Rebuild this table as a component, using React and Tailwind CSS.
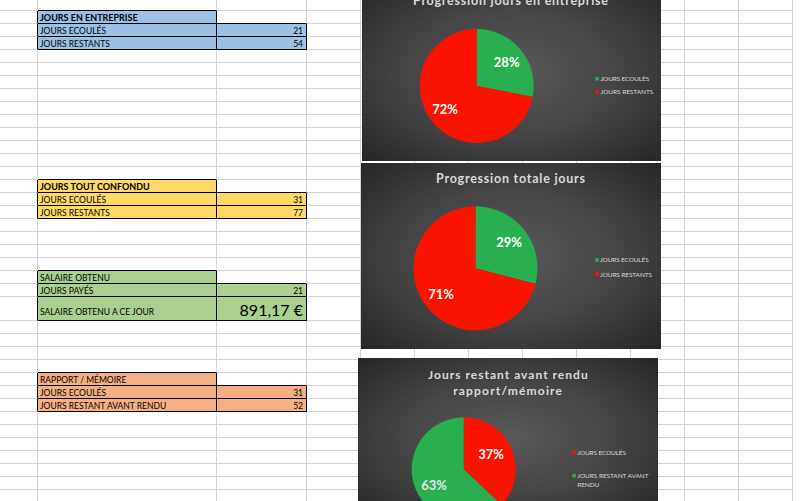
import React from "react";

const GREEN = "#2aaf50";
const RED = "#fa1400";

// column widths of the sheet (first one is cut by the window)
const COLS = [
  "w-[38px]",
  "w-[179px]",
  "w-[90px]",
  "w-[54px]",
  "w-[54px]",
  "w-[54px]",
  "w-[54px]",
  "w-[54px]",
  "w-[54px]",
  "w-[54px]",
  "w-[54px]",
  "w-[54px]",
];

const ROWS = 38;

const sheet = {
  1: { label: "JOURS EN ENTREPRISE", bg: "bg-[#9bc2e6]", head: true, bold: true },
  2: { label: "JOURS ECOULÉS", value: "21", bg: "bg-[#9bc2e6]" },
  3: { label: "JOURS RESTANTS", value: "54", bg: "bg-[#9bc2e6]" },
  14: { label: "JOURS TOUT CONFONDU", bg: "bg-[#ffd966]", head: true, bold: true },
  15: { label: "JOURS ECOULÉS", value: "31", bg: "bg-[#ffd966]" },
  16: { label: "JOURS RESTANTS", value: "77", bg: "bg-[#ffd966]" },
  21: { label: "SALAIRE OBTENU", bg: "bg-[#a9d08e]", head: true },
  22: { label: "JOURS PAYÉS", value: "21", bg: "bg-[#a9d08e]" },
  23: { label: "SALAIRE OBTENU A CE JOUR", value: "891,17 €", bg: "bg-[#a9d08e]", big: true },
  28: { label: "RAPPORT / MÉMOIRE", bg: "bg-[#f4b084]", head: true },
  29: { label: "JOURS ECOULÉS", value: "31", bg: "bg-[#f4b084]" },
  30: { label: "JOURS RESTANT AVANT RENDU", value: "52", bg: "bg-[#f4b084]" },
};

const colored = (r, c) => {
  const row = sheet[r];
  if (!row) return false;
  if (c === 1) return true;
  if (c === 2) return !row.head;
  return false;
};

const rowHeight = (r) => (r === 0 ? "h-[11px]" : r === 23 ? "h-[24px]" : "h-[13px]");

function Cell({ r, c }) {
  const row = sheet[r];
  const on = colored(r, c);
  const right = on || colored(r, c + 1) ? "border-r-black" : "border-r-[#d4d4d4]";
  const bottom = on || colored(r + 1, c) ? "border-b-black" : "border-b-[#d4d4d4]";

  let content = null;
  if (on && c === 1) {
    content = (
      <span
        className={`whitespace-nowrap pl-[2px] leading-[10px] ${row.bold ? "text-[9px] font-bold" : "text-[8.5px]"} ${row.big ? "pb-[3px]" : ""}`}
      >
        {row.label}
      </span>
    );
  }
  if (on && c === 2) {
    content = row.big ? (
      <span className="ml-auto whitespace-nowrap pr-[3px] pb-[2px] text-[16px] leading-[17px]">{row.value}</span>
    ) : (
      <span className="ml-auto pr-[3px] text-[8.5px] leading-[10px]">{row.value}</span>
    );
  }

  return (
    <div
      className={`flex shrink-0 items-end border-r border-b text-black ${COLS[c]} ${right} ${bottom} ${on ? row.bg : "bg-white"}`}
    >
      {content}
    </div>
  );
}

function slice(cx, cy, r, a0, a1) {
  const p = (f) => [cx + r * Math.sin(2 * Math.PI * f), cy - r * Math.cos(2 * Math.PI * f)];
  const [x0, y0] = p(a0);
  const [x1, y1] = p(a1);
  const large = a1 - a0 > 0.5 ? 1 : 0;
  return `M${cx} ${cy} L${x0} ${y0} A${r} ${r} 0 ${large} 1 ${x1} ${y1} Z`;
}

function Chart({ box, pie, labels, titles, legend }) {
  let acc = 0;
  return (
    <div
      className={`absolute overflow-hidden bg-[radial-gradient(ellipse_at_center,#5a5a5a_0%,#454545_50%,#262626_100%)] ${box}`}
    >
      <svg width="100%" height="100%" className="block font-['Lato',sans-serif]">
        {titles.map((t) => (
          <text
            key={t.t}
            x={t.x}
            y={t.y}
            fontSize={t.fs}
            fontWeight="700"
            fill="#d9d9d9"
            textLength={t.len}
            lengthAdjust="spacing"
          >
            {t.t}
          </text>
        ))}
        {pie.slices.map((s) => {
          const a0 = acc;
          acc += s.f;
          return <path key={s.color} d={slice(pie.cx, pie.cy, pie.r, a0, acc)} fill={s.color} />;
        })}
        {labels.map((l) => (
          <text
            key={l.t}
            x={l.x}
            y={l.y + 4.6}
            textAnchor="middle"
            fontSize="13"
            fontWeight="700"
            fill={l.fill || "#ffffff"}
          >
            {l.t}
          </text>
        ))}
        {legend.items.map((it) => (
          <g key={it.t}>
            <rect x={legend.sx} y={it.y - 1.8} width="3.6" height="3.6" fill={it.color} />
            <text x={legend.tx} y={it.y + 2.3} fontSize="6.5" fill="#d9d9d9" textLength={it.len} lengthAdjust="spacing">
              {it.t}
            </text>
            {it.more && (
              <text x={legend.tx} y={it.more.y + 2.3} fontSize="6.5" fill="#d9d9d9" textLength={it.more.len} lengthAdjust="spacing">
                {it.more.t}
              </text>
            )}
          </g>
        ))}
      </svg>
    </div>
  );
}

export default function App() {
  const rows = Array.from({ length: ROWS }, (_, r) => r);
  return (
    <div className="relative h-[501px] w-[800px] overflow-hidden bg-white font-['Lato',sans-serif]">
      <div className="flex flex-col">
        {rows.map((r) => (
          <div key={r} className={`flex ${rowHeight(r)}`}>
            {COLS.map((_, c) => (
              <Cell key={c} r={r} c={c} />
            ))}
          </div>
        ))}
      </div>

      <Chart
        box="left-[362px] top-[-16px] w-[299px] h-[177px]"
        titles={[{ t: "Progression jours en entreprise", x: 51, y: 21, fs: 12.5, len: 195 }]}
        pie={{ cx: 114.7, cy: 102, r: 57, slices: [{ f: 0.28, color: GREEN }, { f: 0.72, color: RED }] }}
        labels={[
          { t: "28%", x: 144.7, y: 78.7 },
          { t: "72%", x: 83, y: 125.3 },
        ]}
        legend={{
          sx: 233.3,
          tx: 238.5,
          items: [
            { t: "JOURS ECOULÉS", color: GREEN, y: 94.7, len: 48.7 },
            { t: "JOURS RESTANTS", color: RED, y: 107.7, len: 52.7 },
          ],
        }}
      />

      <Chart
        box="left-[361px] top-[163px] w-[300px] h-[186px]"
        titles={[{ t: "Progression totale jours", x: 75, y: 20.3, fs: 12.5, len: 149 }]}
        pie={{ cx: 114.5, cy: 105.3, r: 62, slices: [{ f: 0.29, color: GREEN }, { f: 0.71, color: RED }] }}
        labels={[
          { t: "29%", x: 148, y: 79.3 },
          { t: "71%", x: 80, y: 131.3 },
        ]}
        legend={{
          sx: 234.3,
          tx: 239,
          items: [
            { t: "JOURS ECOULÉS", color: GREEN, y: 97, len: 48.7 },
            { t: "JOURS RESTANTS", color: RED, y: 111.3, len: 52 },
          ],
        }}
      />

      <Chart
        box="left-[358px] top-[358px] w-[300px] h-[160px]"
        titles={[
          { t: "Jours restant avant rendu", x: 70, y: 21, fs: 12, len: 159.7 },
          { t: "rapport/mémoire", x: 95.3, y: 37, fs: 12, len: 108.7 },
        ]}
        pie={{ cx: 105.7, cy: 111.3, r: 52, slices: [{ f: 0.37, color: RED }, { f: 0.63, color: GREEN }] }}
        labels={[
          { t: "37%", x: 133, y: 96.3 },
          { t: "63%", x: 76, y: 127, fill: "#e6e6e6" },
        ]}
        legend={{
          sx: 214.3,
          tx: 219.3,
          items: [
            { t: "JOURS ECOULÉS", color: RED, y: 94.7, len: 48.7 },
            {
              t: "JOURS RESTANT AVANT",
              color: GREEN,
              y: 117.7,
              len: 71.3,
              more: { t: "RENDU", y: 127, len: 22 },
            },
          ],
        }}
      />
    </div>
  );
}
